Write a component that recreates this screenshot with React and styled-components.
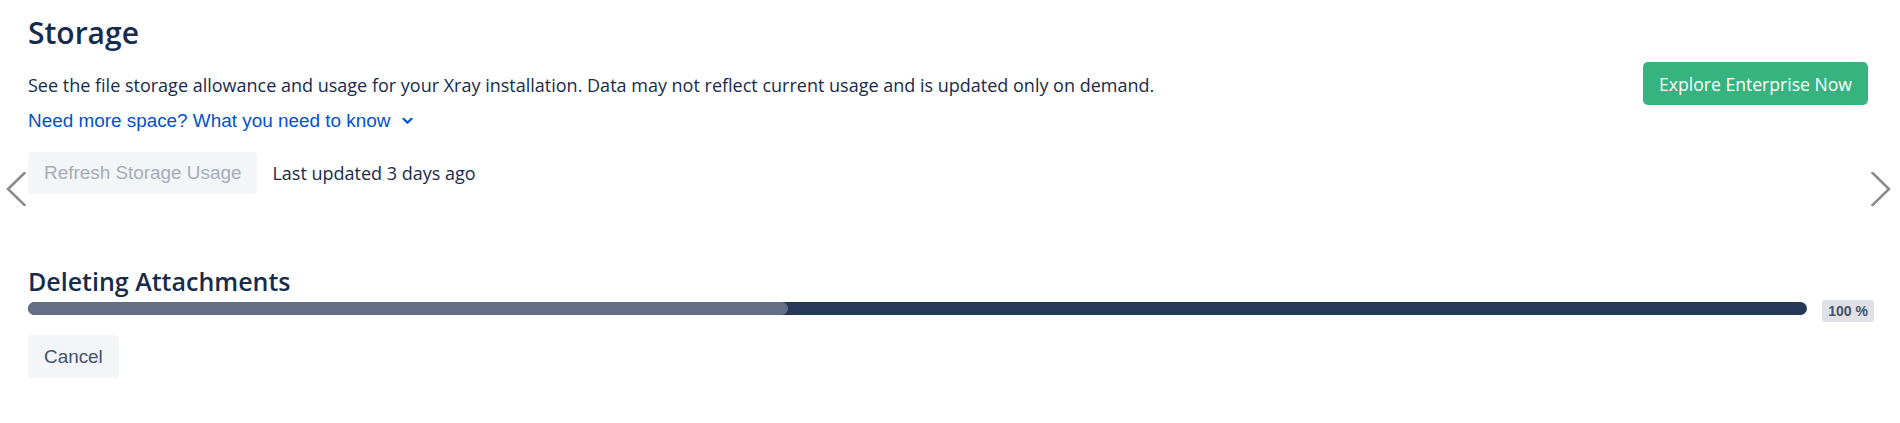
import React from 'react';
import styled, { createGlobalStyle } from 'styled-components';

const GlobalStyle = createGlobalStyle`
  html, body {
    margin: 0;
    padding: 0;
    background: #ffffff;
  }
  body {
    font-family: "Open Sans", "Noto Sans", sans-serif;
    color: #172b4d;
  }
`;

const Page = styled.div`
  position: relative;
  padding: 15px 26px 40px 28px;
  min-height: 368px;
`;

const Header = styled.div`
  display: flex;
  justify-content: space-between;
  align-items: flex-start;
  padding-right: 6px;
`;

const Intro = styled.div`
  display: flex;
  flex-direction: column;
`;

const Title = styled.h2`
  margin: 0;
  font-size: 30px;
  line-height: 36px;
  font-weight: 600;
  color: #172b4d;
`;

const Description = styled.p`
  margin: 22px 0 0;
  font-size: 18px;
  line-height: 24px;
  color: #172b4d;
`;

const MoreLink = styled.a`
  display: inline-flex;
  align-items: center;
  gap: 12px;
  margin-top: 12px;
  font-family: "Liberation Sans", Arial, sans-serif;
  font-size: 18.9px;
  line-height: 24px;
  color: #0052cc;
  text-decoration: none;
  cursor: pointer;
`;

const RefreshRow = styled.div`
  display: flex;
  align-items: center;
  gap: 15px;
  margin-top: 19px;
`;

const GreyButton = styled.button`
  height: ${p => p.$height || 42}px;
  padding: 0 16px;
  border: none;
  border-radius: 4px;
  background: #f4f5f7;
  font-family: "Liberation Sans", Arial, sans-serif;
  font-size: 18.9px;
  color: ${p => (p.disabled ? '#a5adba' : '#42526e')};
  cursor: ${p => (p.disabled ? 'not-allowed' : 'pointer')};
`;

const UpdatedText = styled.span`
  font-size: 18px;
  color: #172b4d;
`;

const EnterpriseButton = styled.button`
  margin-top: 47px;
  height: 43px;
  padding: 0 16px;
  border: none;
  border-radius: 5px;
  background: #36b37e;
  font-family: "Open Sans", "Noto Sans", sans-serif;
  font-size: 17.6px;
  color: #ffffff;
  cursor: pointer;
`;

const SectionTitle = styled.h3`
  margin: 72px 0 0;
  font-size: 25px;
  line-height: 30px;
  font-weight: 600;
  color: #172b4d;
`;

const ProgressRow = styled.div`
  display: flex;
  align-items: flex-start;
  gap: 15px;
  margin-top: 6px;
`;

const Track = styled.div`
  position: relative;
  flex: 1;
  height: 13px;
  border-radius: 7px;
  background: #253858;
  overflow: hidden;
`;

const Fill = styled.div`
  height: 100%;
  border-radius: 7px;
  background: #626f86;
`;

const Badge = styled.span`
  margin-top: -2px;
  height: 22px;
  padding: 0 6px;
  border-radius: 3px;
  background: #dfe1e6;
  font-family: "Liberation Sans", Arial, sans-serif;
  font-size: 14px;
  font-weight: 700;
  line-height: 22px;
  color: #42526e;
`;

const Actions = styled.div`
  margin-top: 13px;
`;

const Arrow = styled.button`
  position: absolute;
  top: 172px;
  ${p => (p.$side === 'left' ? 'left: 6px;' : 'right: 9px;')}
  width: 20px;
  height: 34px;
  padding: 0;
  border: none;
  background: transparent;
  cursor: pointer;
`;

const Chevron = ({ side }) => (
  <svg width="20" height="34" viewBox="0 0 20 34" fill="none">
    <polyline
      points={side === 'left' ? '18.5,1 2,17 18.5,33' : '1.5,1 18,17 1.5,33'}
      stroke="#8a8a8a"
      strokeWidth="2.6"
      strokeLinecap="square"
      fill="none"
    />
  </svg>
);

const SmallChevronDown = () => (
  <svg width="11" height="8" viewBox="0 0 11 8" fill="none">
    <path d="M1.5 1.8 L5.5 5.8 L9.5 1.8" stroke="#0052cc" strokeWidth="2.2" strokeLinecap="round" strokeLinejoin="round" />
  </svg>
);

const progress = 42.7;

export default function App() {
  return (
    <>
      <GlobalStyle />
      <Page>
        <Arrow $side="left" aria-label="Previous">
          <Chevron side="left" />
        </Arrow>
        <Arrow $side="right" aria-label="Next">
          <Chevron side="right" />
        </Arrow>

        <Header>
          <Intro>
            <Title>Storage</Title>
            <Description>
              See the file storage allowance and usage for your Xray installation. Data may not reflect current usage and is updated only on demand.
            </Description>
            <div>
              <MoreLink>
                Need more space? What you need to know
                <SmallChevronDown />
              </MoreLink>
            </div>
            <RefreshRow>
              <GreyButton disabled>Refresh Storage Usage</GreyButton>
              <UpdatedText>Last updated 3 days ago</UpdatedText>
            </RefreshRow>
          </Intro>
          <EnterpriseButton>Explore Enterprise Now</EnterpriseButton>
        </Header>

        <SectionTitle>Deleting Attachments</SectionTitle>
        <ProgressRow>
          <Track>
            <Fill style={{ width: `${progress}%` }} />
          </Track>
          <Badge>100 %</Badge>
        </ProgressRow>
        <Actions>
          <GreyButton $height={43}>Cancel</GreyButton>
        </Actions>
      </Page>
    </>
  );
}
